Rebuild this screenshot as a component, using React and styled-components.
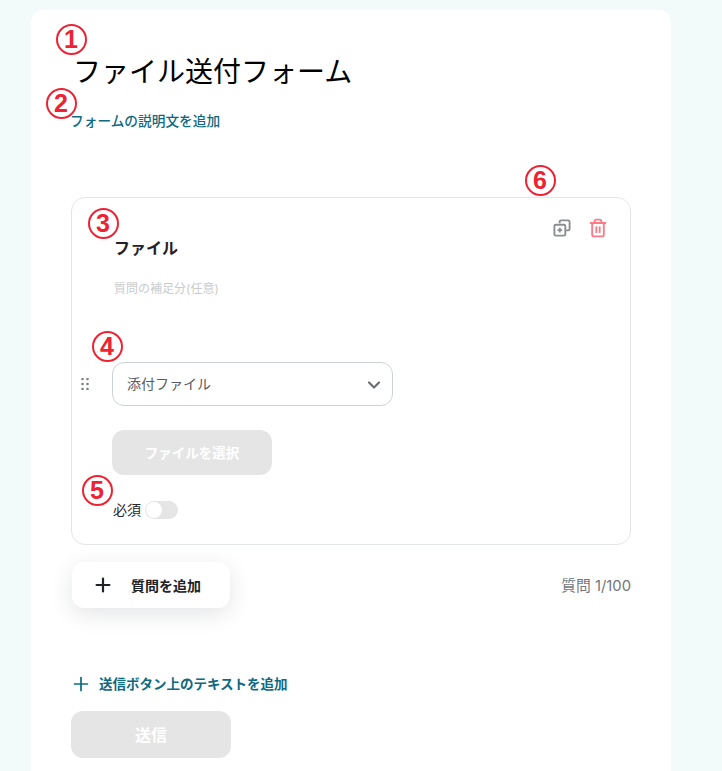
import React from 'react';
import styled, { createGlobalStyle } from 'styled-components';
import { Plus, ChevronDown, Trash2 } from 'lucide-react';

const GlobalStyle = createGlobalStyle`
  html, body {
    margin: 0;
    padding: 0;
    height: 771px;
    overflow: hidden;
    background: #f2fbf9;
  }
  body {
    font-family: "Inter", "Noto Sans CJK JP", sans-serif;
  }
`;

const Page = styled.div`
  padding: 10px 0 0 31px;
  height: 761px;
  overflow: hidden;
`;

const Sheet = styled.main`
  position: relative;
  width: 640px;
  height: 800px;
  box-sizing: border-box;
  padding: 43px 40px 0;
  background: #fff;
  border-radius: 12px 12px 0 0;
`;

const Title = styled.h1`
  margin: 0 0 0 2px;
  font-size: 28px;
  line-height: 38px;
  font-weight: 400;
  color: #000;
`;

const LinkText = styled.div`
  font-size: 13.7px;
  line-height: 20px;
  font-weight: 500;
  color: #0f6a80;
`;

const Description = styled(LinkText)`
  margin: 20px 0 0 -1px;
`;

const QuestionCard = styled.section`
  position: relative;
  width: 560px;
  height: 348px;
  box-sizing: border-box;
  margin-top: 66px;
  padding: 40px 40px 0;
  border: 1px solid #e3e5e7;
  border-radius: 14px;
`;

const QuestionTitle = styled.div`
  margin-left: 2px;
  font-size: 16px;
  line-height: 20px;
  font-weight: 700;
  color: #1f2226;
`;

const QuestionHint = styled.div`
  margin: 21px 0 0 2px;
  font-size: 12px;
  line-height: 20px;
  color: #c9cbcd;
`;

const CardActions = styled.div`
  position: absolute;
  top: 20px;
  right: 22px;
  display: flex;
  align-items: center;
  gap: 17px;
`;

const FieldRow = styled.div`
  display: flex;
  align-items: center;
  margin: 63px 0 0;
`;

const DragHandle = styled.svg`
  position: absolute;
  left: 9px;
  width: 8px;
  height: 12px;
  fill: #7d8083;
`;

const SelectBox = styled.div`
  width: 281px;
  height: 44px;
  box-sizing: border-box;
  display: flex;
  align-items: center;
  justify-content: space-between;
  padding: 0 8px 2px 14px;
  border: 1px solid #cdd1d8;
  border-radius: 12px;
  font-size: 14px;
  color: #585b5f;

  svg {
    margin-top: 4px;
  }
`;

const DisabledButton = styled.div`
  display: flex;
  align-items: center;
  justify-content: center;
  box-sizing: border-box;
  padding-bottom: 2px;
  background: #e5e5e5;
  color: #fff;
  font-weight: 700;
  font-size: ${(p) => p.$size}px;
  width: ${(p) => p.$w}px;
  height: ${(p) => p.$h}px;
  border-radius: 12px;
`;

const FileButton = styled(DisabledButton)`
  margin-top: 24px;
`;

const RequiredRow = styled.div`
  display: flex;
  align-items: center;
  gap: 4px;
  margin: 25px 0 0 1px;
  font-size: 14px;
  line-height: 20px;
  color: #26292c;
`;

const Toggle = styled.div`
  position: relative;
  width: 33px;
  height: 18px;
  border-radius: 9px;
  background: #e5e5e5;

  &::before {
    content: '';
    position: absolute;
    left: 1px;
    top: 1px;
    width: 16px;
    height: 16px;
    border-radius: 50%;
    background: #fff;
  }
`;

const AddRow = styled.div`
  display: flex;
  align-items: center;
  justify-content: space-between;
  width: 560px;
  margin-top: 17px;
`;

const AddButton = styled.div`
  width: 158px;
  height: 46px;
  box-sizing: border-box;
  display: flex;
  align-items: center;
  margin-left: 1px;
  padding-left: 20px;
  gap: 17px;
  background: #fff;
  border-radius: 12px;
  box-shadow: 0 6px 22px rgba(30, 40, 50, 0.12);
  font-size: 14px;
  font-weight: 700;
  color: #1f2226;
`;

const Counter = styled.div`
  padding-bottom: 2px;
  font-size: 14.8px;
  color: #73777b;
`;

const SubmitNote = styled(LinkText)`
  display: flex;
  align-items: center;
  gap: 7px;
  margin: 65px 0 0 -1px;
  font-weight: 700;
  font-size: 13.5px;
`;

const SubmitButton = styled(DisabledButton)`
  margin-top: 16px;
`;

const MarkerCircle = styled.span`
  position: absolute;
  left: ${(p) => p.$x - 15.5}px;
  top: ${(p) => p.$y - 15.5}px;
  width: 31px;
  height: 31px;
  box-sizing: border-box;
  display: flex;
  align-items: center;
  justify-content: center;
  border: 2.8px solid #ee2233;
  border-radius: 50%;
  color: #ee2233;
  font-family: "Liberation Sans", sans-serif;
  font-size: 25px;
  font-weight: 700;
`;

// annotation numbers sit over the form, coordinates are relative to the sheet
const markers = [
  { n: 1, x: 40, y: 29 },
  { n: 2, x: 30, y: 93 },
  { n: 3, x: 72, y: 213 },
  { n: 4, x: 76, y: 336 },
  { n: 5, x: 66, y: 480 },
  { n: 6, x: 509, y: 170 },
];

function CopyIcon() {
  return (
    <svg width="18" height="18" viewBox="0 0 19 19" fill="none" stroke="#8b8e91" strokeWidth="2">
      <path d="M7 4.5V3a1.5 1.5 0 0 1 1.5-1.5H16A1.5 1.5 0 0 1 17.5 3v7.5A1.5 1.5 0 0 1 16 12h-3" />
      <rect x="1.5" y="6" width="11.5" height="11.5" rx="1.5" />
      <path d="M7.2 9.2v5M4.7 11.7h5" />
    </svg>
  );
}

export default function App() {
  return (
    <>
      <GlobalStyle />
      <Page>
        <Sheet>
          <Title>ファイル送付フォーム</Title>
          <Description>フォームの説明文を追加</Description>

          <QuestionCard>
            <CardActions>
              <CopyIcon />
              <Trash2 size={20} color="#fb7b87" strokeWidth={2.2} />
            </CardActions>
            <QuestionTitle>ファイル</QuestionTitle>
            <QuestionHint>質問の補足分(任意)</QuestionHint>
            <FieldRow>
              <DragHandle viewBox="0 0 8 12">
                {[1, 6, 11].map((cy) => (
                  <g key={cy}>
                    <circle cx="1.5" cy={cy} r="1.3" />
                    <circle cx="6.5" cy={cy} r="1.3" />
                  </g>
                ))}
              </DragHandle>
              <SelectBox>
                添付ファイル
                <ChevronDown size={20} color="#6b6e72" strokeWidth={2.6} />
              </SelectBox>
            </FieldRow>
            <FileButton $w={160} $h={45} $size={13.5}>ファイルを選択</FileButton>
            <RequiredRow>
              必須
              <Toggle />
            </RequiredRow>
          </QuestionCard>

          <AddRow>
            <AddButton>
              <Plus size={22} color="#1f2226" strokeWidth={2.4} />
              質問を追加
            </AddButton>
            <Counter>質問 1/100</Counter>
          </AddRow>

          <SubmitNote>
            <Plus size={22} color="#0f6a80" strokeWidth={1.9} />
            送信ボタン上のテキストを追加
          </SubmitNote>
          <SubmitButton $w={160} $h={47} $size={16}>送信</SubmitButton>

          {markers.map((m) => (
            <MarkerCircle key={m.n} $x={m.x} $y={m.y}>{m.n}</MarkerCircle>
          ))}
        </Sheet>
      </Page>
    </>
  );
}
